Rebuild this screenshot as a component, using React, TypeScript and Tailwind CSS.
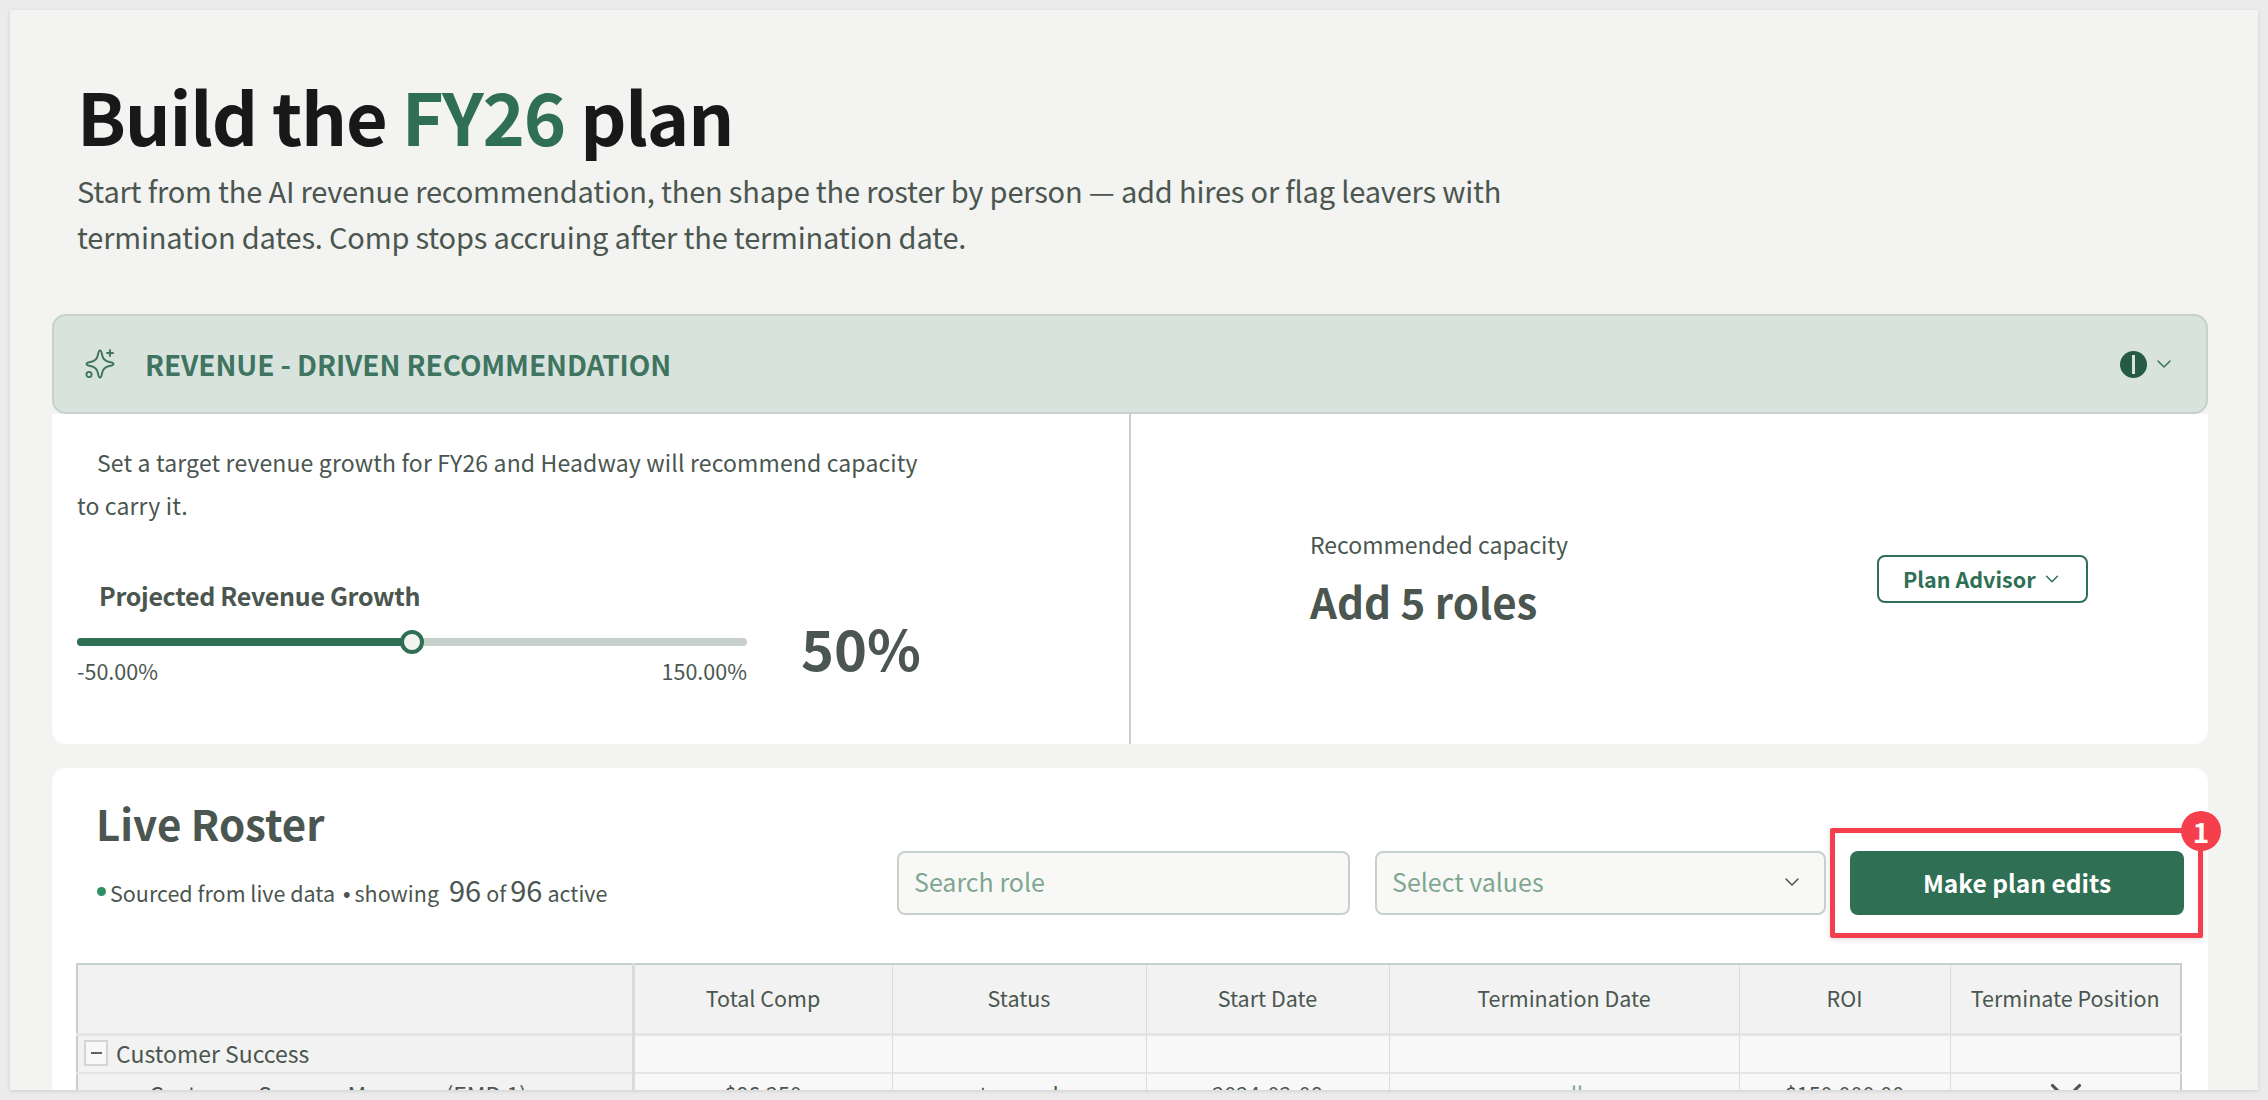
import React from "react";
import { ChevronDown, X } from "lucide-react";

const font = { fontFamily: '"Noto Sans CJK SC", "Noto Sans", sans-serif' };

function Sparkle() {
  return (
    <svg width="30" height="30" viewBox="0 0 30 30" fill="none" stroke="#3f7560" strokeWidth="1.9" strokeLinecap="round" strokeLinejoin="round">
      <path d="M15 1.500C16.200 1.500 16.600 3 17 5.500C17.700 10 20 12.300 24.500 13C27 13.400 28.500 13.800 28.500 15C28.500 16.200 27 16.600 24.500 17C20 17.700 17.700 20 17 24.500C16.600 27 16.200 28.500 15 28.500C13.800 28.500 13.400 27 13 24.500C12.300 20 10 17.700 5.500 17C3 16.600 1.500 16.200 1.500 15C1.500 13.800 3 13.400 5.500 13C10 12.300 12.300 10 13 5.500C13.400 3 13.800 1.500 15 1.500Z" />
      <path d="M25 1v6M22 4h6" />
      <circle cx="4" cy="25.500" r="2.600" />
    </svg>
  );
}

const columns = ["", "Total Comp", "Status", "Start Date", "Termination Date", "ROI", "Terminate Position"];
const widths = ["w-[556px]", "w-[259px]", "w-[254px]", "w-[243px]", "w-[350px]", "w-[211px]", "w-[231px]"];

export default function App() {
  return (
    <div className="h-[1100px] overflow-hidden bg-[#ebebeb] p-[10px]" style={font}>
      <div className="h-[1080px] overflow-hidden bg-[#f3f3f1] pl-[42px] pr-[50px] shadow-[0_1px_4px_rgba(0,0,0,0.12)]">
        <div className="relative h-[1140px]">
          <header className="pl-[25px] pt-[55px]">
            <h1 className="text-[72px] font-semibold leading-[100px] tracking-[-1.2px] text-[#181818]">
              Build the <span className="text-[#2f6f54]">FY26</span> plan
            </h1>
            <p className="mt-[2px] w-[1500px] text-[29px] leading-[46px] tracking-[-0.18px] text-[#4a564f]">
              Start from the AI revenue recommendation, then shape the roster by person — add hires or flag leavers with
              <br />
              termination dates. Comp stops accruing after the termination date.
            </p>
          </header>

          <section className="mt-[55px]">
            <div className="flex h-[100px] items-center rounded-[14px] border-2 border-[#c8d0cb] bg-[#d9e3dd] pl-[31px] pr-[30px]">
              <Sparkle />
              <h2 className="ml-[30px] flex-1 text-[28px] font-semibold tracking-[-0.1px] text-[#3f7560]">REVENUE - DRIVEN RECOMMENDATION</h2>
              <span className="flex h-[27px] w-[27px] items-center justify-center rounded-full bg-[#255a45]">
                <span className="h-[19px] w-[3px] bg-[#d9e3dd]" />
              </span>
              <ChevronDown size={24} strokeWidth={1.6} className="ml-[5px] text-[#3f7560]" />
            </div>
            <div className="flex h-[330px] rounded-b-[14px] bg-white">
              <div className="w-[1079px] border-r-2 border-[#c8d0cb] pl-[25px] pt-[27px]">
                <p className="w-[850px] indent-[20px] text-[23px] leading-[43px] tracking-[0.14px] text-[#4a564f]">
                  Set a target revenue growth for FY26 and Headway will recommend capacity to carry it.
                </p>
                <p className="ml-[22px] mt-[50px] text-[25px] font-semibold leading-[36px] tracking-[-0.3px] text-[#4a564f]">Projected Revenue Growth</p>
                <div className="flex">
                  <div className="w-[670px]">
                    <div className="relative mt-[25px] h-[8px] rounded-full bg-[#c8d0cb]">
                      <div className="h-[8px] w-[335px] rounded-full bg-[#2f6f54]" />
                      <div className="absolute left-[323px] top-[-8px] h-[24px] w-[24px] rounded-full border-[4px] border-[#2f6f54] bg-[#f3f5f3]" />
                    </div>
                    <div className="mt-[11px] flex justify-between text-[21.500px] leading-[28px] text-[#4a564f]">
                      <span>-50.00%</span>
                      <span>150.00%</span>
                    </div>
                  </div>
                  <div className="ml-[54px] mt-[-6px] text-[56px] font-semibold leading-[80px] text-[#4a564f]">50%</div>
                </div>
              </div>
              <div className="flex flex-1 items-center pl-[179px]">
                <div className="w-[567px] pt-[4px]">
                  <p className="text-[23px] leading-[36px] text-[#4a564f]">Recommended capacity</p>
                  <p className="mt-[4px] text-[42px] font-semibold leading-[70px] text-[#4a564f]">Add 5 roles</p>
                </div>
                <button className="flex h-[48px] w-[211px] items-center justify-start gap-[5px] rounded-[8px] border-2 border-[#2f6f54] bg-white pl-[24px] text-[21.500px] font-semibold text-[#2f6f54]">
                  Plan Advisor
                  <ChevronDown size={22} strokeWidth={1.6} />
                </button>
              </div>
            </div>
          </section>

          <section className="mt-[24px] rounded-[14px] bg-white px-[24px]">
            <div className="relative flex h-[195px] items-start">
              <div className="w-[821px] pl-[20px] pt-[20px]">
                <h2 className="text-[42px] font-semibold leading-[70px] text-[#4a564f]">Live Roster</h2>
                <p className="mt-[13px] flex items-baseline text-[21.500px] leading-[36px] text-[#4a564f]">
                  <span className="ml-[1px] mr-[4px] inline-block h-[9px] w-[9px] -translate-y-[6px] rounded-full bg-[#2f8f60]" />
                  Sourced from live data
                  <span className="ml-[8px] font-['Liberation_Sans']">•</span>
                  <span className="ml-[4px]">showing</span>
                  <span className="ml-[10px] text-[29px]">96</span>
                  <span className="ml-[5px]">of</span>
                  <span className="ml-[4px] text-[29px]">96</span>
                  <span className="ml-[5px]">active</span>
                </p>
              </div>
              <div className="mt-[83px] flex h-[64px] items-center gap-[25px]">
                <div className="flex h-[64px] w-[453px] items-center rounded-[8px] border-2 border-[#c8d0cb] bg-[#f8f8f7] pb-[2px] pl-[15px] text-[25px] text-[#7fa78f]">Search role</div>
                <div className="flex h-[64px] w-[451px] items-center justify-between rounded-[8px] border-2 border-[#c8d0cb] bg-[#f8f8f7] pb-[2px] pl-[15px] pr-[20px] text-[25px] text-[#7fa78f]">
                  Select values
                  <ChevronDown size={24} strokeWidth={1.5} className="text-[#4a564f]" />
                </div>
              </div>
              <button className="ml-[24px] mt-[83px] h-[64px] w-[334px] rounded-[8px] bg-[#2f6f54] text-[24.500px] font-semibold text-white">Make plan edits</button>
              <div className="absolute right-[-19px] top-[60px] h-[110px] w-[373px] rounded-[2px] border-[5px] border-[#f63f4d] shadow-[0_2px_6px_rgba(0,0,0,0.12)]" />
              <div className="absolute right-[-37px] top-[43px] flex h-[40px] w-[40px] items-center justify-center rounded-full bg-[#f63f4d] text-[28px] font-bold leading-none text-white">1</div>
            </div>
            <table className="table-fixed border-collapse border-2 border-[#c8d0cb] text-[21.500px] text-[#4a564f]">
              <thead>
                <tr className="h-[70px] border-b-[3px] border-[#e4e5e3] bg-[#f2f2f2]">
                  {columns.map((c, i) => (
                    <th key={i} className={`${widths[i]} border-l ${i === 1 ? "border-l-[3px]" : ""} border-[#d9dcd9] pb-[2px] text-center font-normal`}>{c}</th>
                  ))}
                </tr>
              </thead>
              <tbody>
                <tr className="h-[39px] border-b-2 border-[#e4e5e3] bg-[#f8f8f8]">
                  <td className="bg-[#f2f2f2] pb-[2px] pl-[6px] text-[23px]">
                    <span className="flex items-center">
                      <span className="flex h-[26px] w-[24px] items-center justify-center border-2 border-[#d0d7d3] bg-[#f8f8f8]">
                        <span className="h-[2px] w-[11px] bg-[#5b665f]" />
                      </span>
                      <span className="ml-[8px]">Customer Success</span>
                    </span>
                  </td>
                  {columns.slice(1).map((c, i) => (
                    <td key={c} className={`border-l ${i === 0 ? "border-l-[3px]" : ""} border-[#d9dcd9]`} />
                  ))}
                </tr>
                <tr className="h-[40px] bg-[#f8f8f8] text-center">
                  <td className="bg-[#f2f2f2] pl-[71px] text-left text-[23px]">Customer Success Manager (EMD 1)</td>
                  <td className="border-l-[3px] border-[#d9dcd9]">$86,250</td>
                  <td className="border-l border-[#d9dcd9]">tenured</td>
                  <td className="border-l border-[#d9dcd9]">2024-02-08</td>
                  <td className="border-l border-[#d9dcd9] text-[#7fa78f]">null</td>
                  <td className="border-l border-[#d9dcd9]">$150,000.00</td>
                  <td className="border-l border-[#d9dcd9]">
                    <X size={54} strokeWidth={1.4} className="mx-auto -my-[7px] translate-x-[1px] translate-y-[5px]" />
                  </td>
                </tr>
              </tbody>
            </table>
          </section>
        </div>
      </div>
    </div>
  );
}
